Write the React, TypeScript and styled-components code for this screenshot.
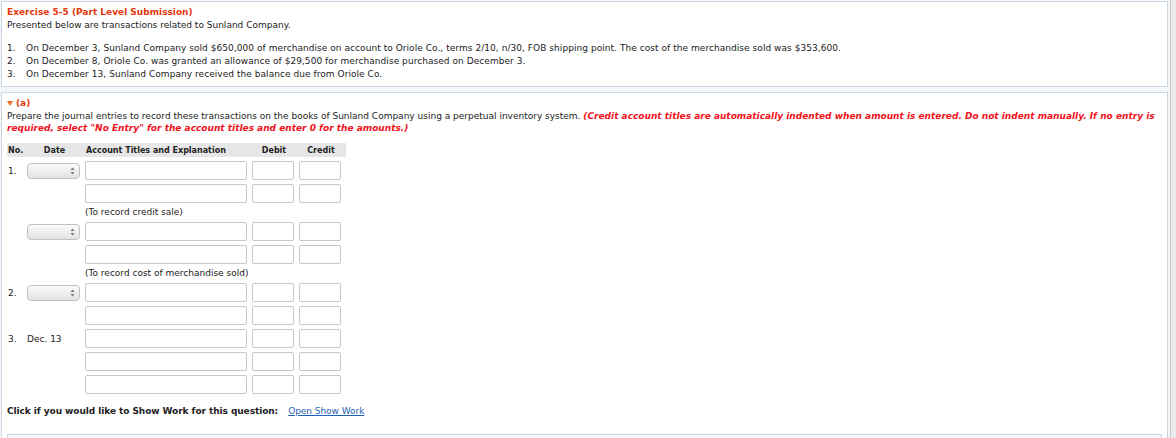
import styled, { createGlobalStyle } from "styled-components";

const GlobalStyle = createGlobalStyle`
    html, body {
        margin: 0;
        padding: 0;
        background: #f4f7fb;
    }
    body {
        font-family: "DejaVu Sans", Verdana, sans-serif;
        font-size: 9px;
        color: #222;
    }
`

const Page = styled.div`
    display: flex;
    height: 438px;
    overflow: hidden;
`

const Main = styled.div`
    flex: 1;
    display: flex;
    flex-direction: column;
    gap: 5px;
    padding: 1px 2px 0 1px;
`

const ScrollTrack = styled.div`
    width: 5px;
    border-left: 1px solid #c6c6c6;
    background: #ebebeb;
`

const Panel = styled.div`
    background: #fff;
    border: 1px solid #ccd5e0;
    padding: 4px 5px 5px;
`

const Title = styled.div`
    font-weight: bold;
    color: #e4380f;
    line-height: 13px;
`

const Line = styled.div`
    line-height: 13px;
`

const List = styled.div`
    margin-top: 10px;
`

const Item = styled.div`
    display: flex;
    line-height: 13px;
    letter-spacing: 0.05px;
`

const ItemNum = styled.span`
    width: 19px;
`

const SectionHead = styled.div`
    display: flex;
    align-items: center;
    gap: 3px;
    line-height: 13px;
    font-weight: bold;
    color: #e4380f;
`

const Instructions = styled.div`
    line-height: 12px;
`

const Warn = styled.span`
    color: #f2121b;
    font-weight: bold;
    font-style: italic;
`

const Table = styled.div`
    margin-top: 9px;
`

const HeaderRow = styled.div`
    display: grid;
    grid-template-columns: 15px 53px 162px 42px 42px;
    column-gap: 5px;
    width: 336px;
    height: 14px;
    padding: 0 2px 0 1px;
    align-items: center;
    background: #e6e6e6;
    font-size: 8px;
    font-weight: bold;
    margin-bottom: 4px;
    white-space: nowrap;
`

const HeadCell = styled.span<{ $center?: boolean }>`
    text-align: ${(p) => (p.$center ? "center" : "left")};
`

const Row = styled.div`
    display: grid;
    grid-template-columns: 15px 53px 162px 42px 42px;
    column-gap: 5px;
    height: 19px;
    margin-bottom: 4px;
    align-items: center;
    white-space: nowrap;
`

const NoteRow = styled.div`
    display: grid;
    grid-template-columns: 15px 53px 162px;
    column-gap: 5px;
    line-height: 11px;
    margin-bottom: 4px;
    white-space: nowrap;
`

const RowNum = styled.span`
    padding-left: 1px;
`

const DateText = styled.span`
    padding-left: 0;
`

const Field = styled.input`
    box-sizing: border-box;
    width: 100%;
    height: 19px;
    margin: 0;
    border: 1px solid #c8c8c8;
    border-radius: 2px;
    background: #fff;
`

const Select = styled.div`
    box-sizing: border-box;
    height: 16px;
    border: 1px solid #c2c2c2;
    border-radius: 4px;
    background: linear-gradient(#fbfbfb, #e2e2e2);
    display: flex;
    align-items: center;
    justify-content: flex-end;
    padding-right: 4px;
`

const Footer = styled.div`
    margin-top: 11px;
    line-height: 13px;
    font-weight: bold;
    letter-spacing: -0.07px;
    display: flex;
    gap: 10px;
`

const Link = styled.a`
    font-weight: normal;
    letter-spacing: -0.05px;
    color: #1f5fb4;
    text-decoration: underline;
`

const WorkBox = styled.div`
    margin-top: 16px;
    height: 40px;
    border: 1px solid #ccd5e0;
    background: #f6f8fb;
`

const Arrows = () => (
    <svg width="5" height="8" viewBox="0 0 5 8">
        <path d="M2.5 0.5 L4.5 3 L0.5 3 Z" fill="#777" />
        <path d="M2.5 7.5 L4.5 5 L0.5 5 Z" fill="#777" />
    </svg>
)

const Triangle = () => (
    <svg width="6" height="5" viewBox="0 0 6 5">
        <path d="M0 0 L6 0 L3 5 Z" fill="#f26b21" />
    </svg>
)

type Entry = { num?: string; date?: "select" | string; note?: string }

const entries: Entry[][] = [
    [{ num: "1.", date: "select" }, {}, { note: "(To record credit sale)" }],
    [{ date: "select" }, {}, { note: "(To record cost of merchandise sold)" }],
    [{ num: "2.", date: "select" }, {}],
    [{ num: "3.", date: "Dec. 13" }, {}, {}],
]

export default function App() {
    return (
        <>
            <GlobalStyle />
            <Page>
                <Main>
                    <Panel>
                        <Title>Exercise 5-5 (Part Level Submission)</Title>
                        <Line>Presented below are transactions related to Sunland Company.</Line>
                        <List>
                            <Item>
                                <ItemNum>1.</ItemNum>
                                <span>On December 3, Sunland Company sold $650,000 of merchandise on account to Oriole Co., terms 2/10, n/30, FOB shipping point. The cost of the merchandise sold was $353,600.</span>
                            </Item>
                            <Item>
                                <ItemNum>2.</ItemNum>
                                <span>On December 8, Oriole Co. was granted an allowance of $29,500 for merchandise purchased on December 3.</span>
                            </Item>
                            <Item>
                                <ItemNum>3.</ItemNum>
                                <span>On December 13, Sunland Company received the balance due from Oriole Co.</span>
                            </Item>
                        </List>
                    </Panel>
                    <Panel>
                        <SectionHead>
                            <Triangle />
                            <span>(a)</span>
                        </SectionHead>
                        <Instructions>
                            Prepare the journal entries to record these transactions on the books of Sunland Company using a perpetual inventory system.{" "}
                            <Warn>
                                (Credit account titles are automatically indented when amount is entered. Do not indent manually. If no entry is required, select "No Entry" for the account titles and enter 0 for the amounts.)
                            </Warn>
                        </Instructions>
                        <Table>
                            <HeaderRow>
                                <HeadCell>No.</HeadCell>
                                <HeadCell $center>Date</HeadCell>
                                <HeadCell>Account Titles and Explanation</HeadCell>
                                <HeadCell $center>Debit</HeadCell>
                                <HeadCell $center>Credit</HeadCell>
                            </HeaderRow>
                            {entries.map((group, gi) =>
                                group.map((e, i) =>
                                    e.note ? (
                                        <NoteRow key={`${gi}-${i}`}>
                                            <span />
                                            <span />
                                            <span>{e.note}</span>
                                        </NoteRow>
                                    ) : (
                                        <Row key={`${gi}-${i}`}>
                                            <RowNum>{e.num ?? ""}</RowNum>
                                            {e.date === "select" ? (
                                                <Select>
                                                    <Arrows />
                                                </Select>
                                            ) : (
                                                <DateText>{e.date ?? ""}</DateText>
                                            )}
                                            <Field />
                                            <Field />
                                            <Field />
                                        </Row>
                                    )
                                )
                            )}
                        </Table>
                        <Footer>
                            <span>Click if you would like to Show Work for this question:</span>
                            <Link href="#">Open Show Work</Link>
                        </Footer>
                        <WorkBox />
                    </Panel>
                </Main>
                <ScrollTrack />
            </Page>
        </>
    )
}
